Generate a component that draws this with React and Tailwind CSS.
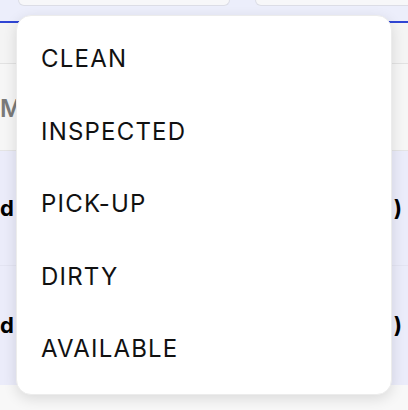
import React from 'react';

const options = ['CLEAN', 'INSPECTED', 'PICK-UP', 'DIRTY', 'AVAILABLE'];

function Row({ height }) {
  return (
    <div className={`flex items-center justify-between ${height}`}>
      <span className="text-[22px] font-bold text-black">d</span>
      <span className="mr-[6px] text-[22px] font-bold text-black">)</span>
    </div>
  );
}

export default function App() {
  return (
    <div
      className="relative flex h-[410px] w-[408px] flex-col overflow-hidden bg-[#f8f8f8]"
      style={{ fontFamily: 'Inter, "Noto Sans", sans-serif' }}
    >
      {/* tab strip */}
      <div className="flex h-[21px] items-start bg-[#eceefb]">
        <div className="ml-[18px] h-[6px] w-[212px] rounded-b-[12px] border border-t-0 border-[#dcdde6] bg-[#f7f7f9]" />
        <div className="ml-[25px] h-[6px] flex-1 -mr-[20px] rounded-b-[12px] border border-t-0 border-[#dcdde6] bg-[#f7f7f9]" />
      </div>
      <div className="h-[2px] bg-[#2f45d4]" />
      <div className="h-[41px] border-b border-[#e2e2e2] bg-[#f4f4f4]" />
      <div className="flex h-[87px] items-center border-b border-[#e4e4e4] bg-[#f6f6f6] pt-[3px]">
        <span className="text-[24px] font-semibold text-[#7a7a7a]">M</span>
      </div>
      <div className="flex flex-col bg-[#ebecfa]">
        <div className="border-b border-[#e3e4f2]">
          <Row height="h-[114px]" />
        </div>
        <Row height="h-[119px]" />
      </div>
      <div className="flex-1 bg-[#f8f8f8]" />

      {/* dropdown menu */}
      <div className="absolute left-[16px] top-[15px] w-[376px] rounded-[15px] border border-[#ececec] bg-white pt-[7px] pb-[8px] shadow-[0_4px_14px_rgba(0,0,0,0.12)]">
        {options.map((o) => (
          <div key={o} className="flex h-[72.5px] items-center pl-[24px] text-[24px] tracking-[1.2px] text-[#111]">
            {o}
          </div>
        ))}
      </div>
    </div>
  );
}
